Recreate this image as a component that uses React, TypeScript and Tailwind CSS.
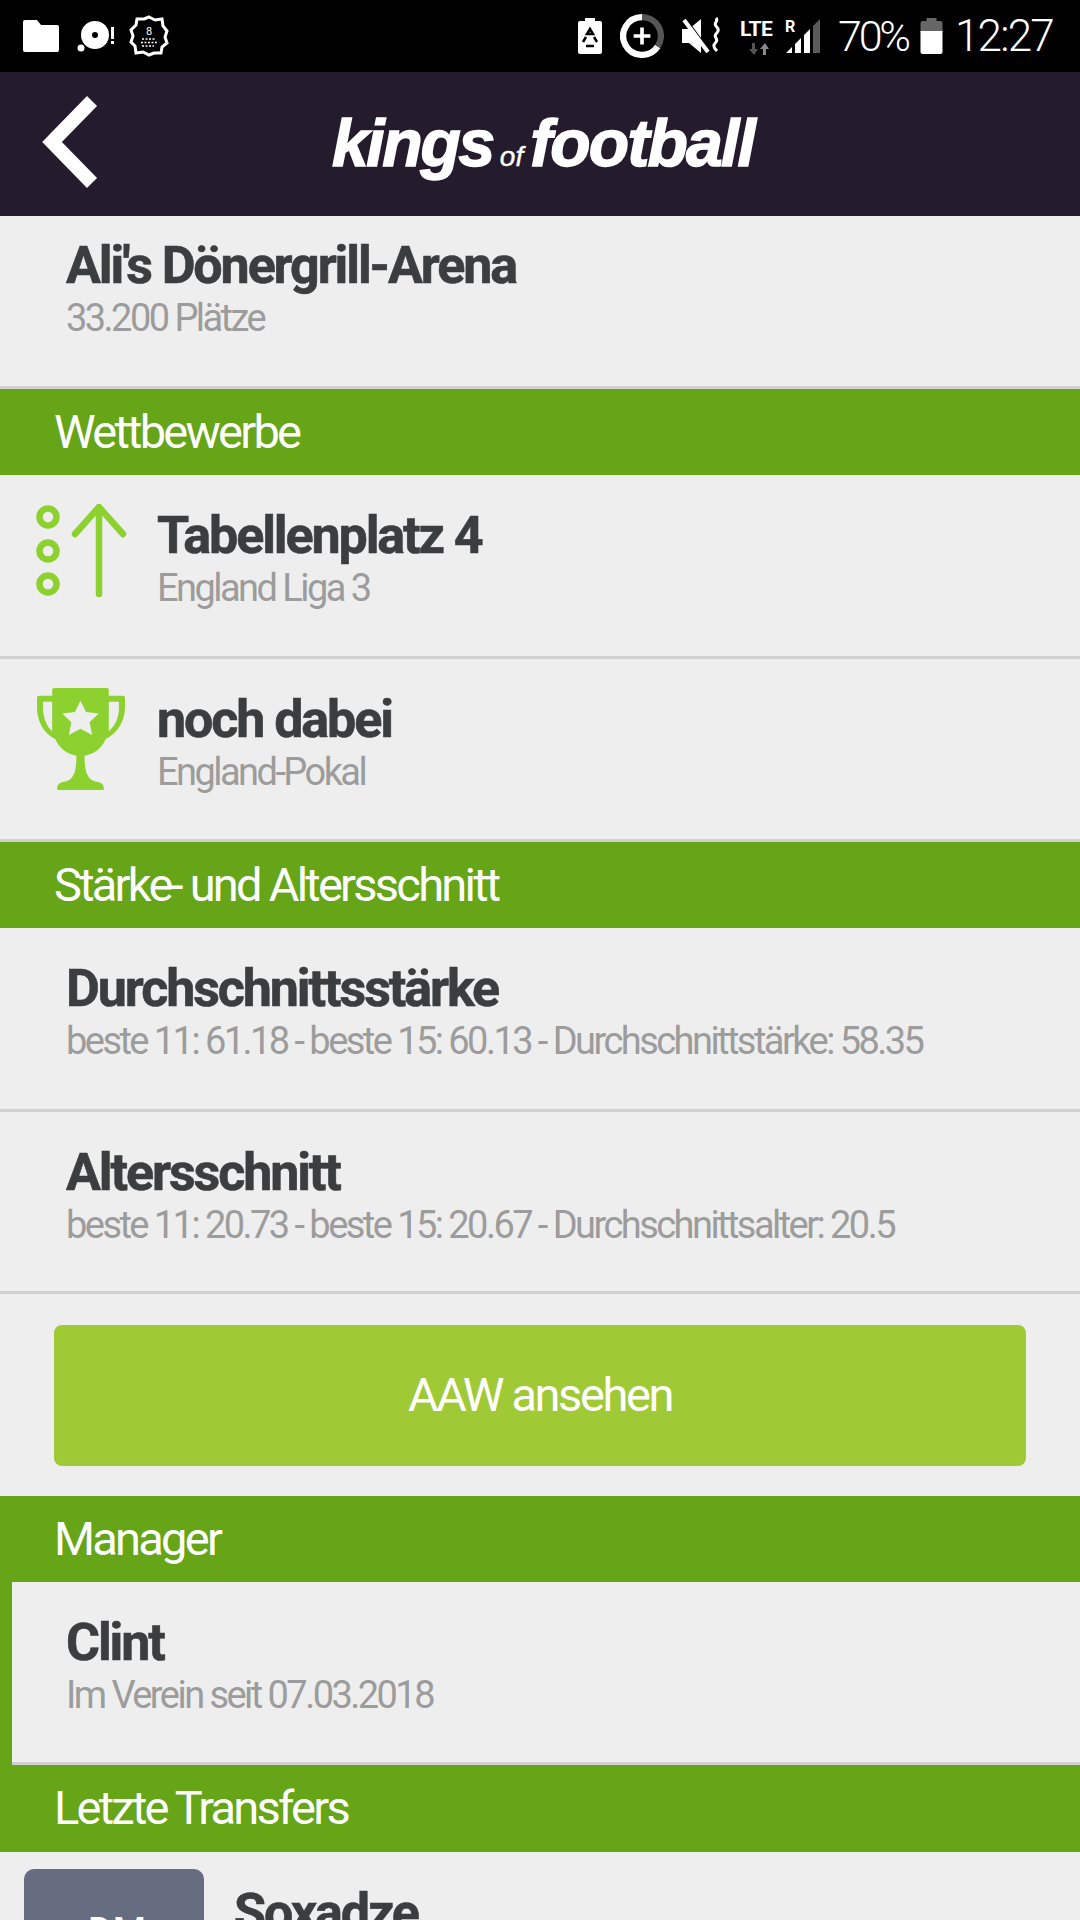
import React from "react";

const Sec = ({ t, h = 87 }: { t: string; h?: number }) => (
  <div className="bg-[#65a517] pl-[54px] flex items-center text-white text-[47px] font-normal tracking-[-2.75px] leading-none" style={{ height: h }}>
    <span className="relative top-[-1px]">{t}</span>
  </div>
);

const Row = ({ title, sub, icon, h = 184, pad = 66, top = 31 }: { title: string; sub: string; icon?: React.ReactNode; h?: number; pad?: number; top?: number }) => (
  <div className="relative border-b-[3px] border-[#d0d0d0]" style={{ height: h, paddingLeft: pad, paddingTop: top }}>
    {icon}
    <div className="text-[52px] leading-[60px] font-bold text-[#3c3d3f] tracking-[-2.1px] whitespace-nowrap [-webkit-text-stroke:0.6px_#3c3d3f]">{title}</div>
    <div className="text-[38px] leading-[44px] text-[#9c9c9c] tracking-[-2.55px] whitespace-nowrap font-normal">{sub}</div>
  </div>
);

const RankIcon = () => (
  <svg width="96" height="96" viewBox="0 0 96 96" className="absolute left-[36px] top-[29px]" fill="none" stroke="#8dd130" strokeLinecap="round" strokeLinejoin="round">
    <circle cx="12" cy="13" r="8.5" strokeWidth="6.500" />
    <circle cx="12" cy="47" r="8.5" strokeWidth="6.500" />
    <circle cx="12" cy="80" r="8.5" strokeWidth="6.500" />
    <path d="M63 90V3M39 30L63 3l24 27" strokeWidth="6.500" />
  </svg>
);

const Trophy = () => (
  <svg width="89" height="102" viewBox="0 0 88 104" preserveAspectRatio="none" className="absolute left-[37px] top-[29px]">
    <path fillRule="evenodd" fill="#8dd130" d="M17 0h52a2 2 0 0 1 2 2v6h14a2 2 0 0 1 2 2v10c0 14-8 27-19 32-4 10-13 16-21 17 0 14 2 24 10 26 5 1 9 2 9 7v3H20v-3c0-5 4-6 9-7 8-2 10-12 10-26-8-1-17-7-21-17C7 47 0 34 0 20V10a2 2 0 0 1 2-2h13V2a2 2 0 0 1 2-2zM6 14v6c0 11 4 20 9 24V14zM71 14v30c6-5 10-13 10-24v-6z" />
    <path fill="#eeeeee" d="M43 13l5.5 11.5 12.5 1.5-9 9 2.500 13L43 41.500 31.500 48 34 35l-9-9 12.500-1.500z" />
  </svg>
);

const LogoText = () => (
  <div className="flex items-baseline text-white font-bold italic whitespace-nowrap [-webkit-text-stroke:1.5px_white]" style={{ fontFamily: '"Liberation Sans", sans-serif' }}>
    <span className="text-[66px] tracking-[-2.3px] leading-none">kings</span>
    <span className="text-[28px] font-normal ml-[7px] mr-[7px] tracking-[0px] leading-none [-webkit-text-stroke:0.4px_white]">of</span>
    <span className="text-[66px] tracking-[-1.8px] leading-none">football</span>
  </div>
);

const StatusLeft = () => (
  <div className="flex items-center">
    <svg width="36" height="32" viewBox="0 0 36 32" className="ml-[23px]"><path fill="#fff" d="M2 0h12l4 5h16a2 2 0 0 1 2 2v23a2 2 0 0 1-2 2H2a2 2 0 0 1-2-2V2a2 2 0 0 1 2-2z" /></svg>
    <svg width="40" height="36" viewBox="0 0 38 36" className="ml-[17px]">
      <path fillRule="evenodd" fill="#fff" d="M18 3a14 14 0 1 1 0 28 14 14 0 0 1 0-28zm0 11a3 3 0 1 0 0 6 3 3 0 0 0 0-6z" />
      <circle cx="4" cy="30" r="3.500" fill="#fff" />
      <rect x="34" y="9" width="3" height="12" fill="#fff" />
      <rect x="34" y="23" width="3" height="3" fill="#fff" />
    </svg>
    <svg width="42" height="42" viewBox="0 0 42 42" className="ml-[12px]" fill="none">
      <path stroke="#fff" strokeWidth="3" d="M21 2l6 3 7-1 1 7 4 5-2 6 2 6-5 4-1 6-7 0-5 2-6-3-7 1-1-7-4-4 2-6-2-6 5-5 1-6 7 0z" />
      <text x="21" y="20" textAnchor="middle" fill="#fff" fontSize="11" style={{ fontFamily: '"Roboto", sans-serif' }}>8</text>
      <path stroke="#fff" strokeWidth="1.500" strokeDasharray="2 1.500" d="M14 24h14M13 27.500h16M14 31h12" />
    </svg>
  </div>
);

const StatusRight = () => (
  <div className="flex items-center absolute left-[578px] top-0 h-[72px]" style={{ fontFamily: '"Roboto", sans-serif' }}>
    <svg width="24" height="36" viewBox="0 0 24 36">
      <path fill="#fff" d="M7 0h10v3h5a2 2 0 0 1 2 2v29a2 2 0 0 1-2 2H2a2 2 0 0 1-2-2V5a2 2 0 0 1 2-2h5z" />
      <path fill="none" stroke="#000" strokeWidth="2.500" d="M12 11l-3 5h6zM5 24l3-5M19 24l-3-5M8 28h8" />
    </svg>
    <svg width="44" height="44" viewBox="0 0 42 42" className="ml-[18px]" fill="none">
      <path stroke="#fff" strokeWidth="6" d="M21 3a18 18 0 1 0 15 28" />
      <path stroke="#555" strokeWidth="6" d="M21 3a18 18 0 0 1 15 28" />
      <path stroke="#fff" strokeWidth="3.500" d="M21 13v16M13 21h16" />
    </svg>
    <svg width="41" height="40" viewBox="0 0 41 38" className="ml-[18px]">
      <path fill="#fff" d="M0 12h7L19 2v34L7 26H0z" />
      <path stroke="#000" strokeWidth="3" d="M1 -1l22 30" />
      <path stroke="#fff" strokeWidth="4" d="M2 3l24 32" />
      <path stroke="#fff" strokeWidth="3" fill="none" d="M34 1c3 3-3 5 0 8s3 5 0 8 3 5 0 8-3 5 1 9" />
    </svg>
    <div className="relative w-[38px] h-[40px] ml-[17px] text-white font-bold text-[21px] leading-none">
      <span className="absolute left-0 top-[3px] tracking-[-0.5px]">LTE</span>
      <svg width="22" height="12" viewBox="0 0 22 12" className="absolute left-[8px] top-[27px]">
        <path fill="#555" d="M4 0h3v6h3l-4 6-5-6h3z" />
        <path fill="#888" d="M15 12h3V6h3l-4-6-5 6h3z" />
      </svg>
    </div>
    <div className="relative w-[38px] h-[38px] ml-[7px]">
      <span className="absolute left-0 top-[2px] text-white font-bold text-[16px] leading-none">R</span>
      <svg width="38" height="36" viewBox="0 0 36 36" className="absolute left-0 top-[1px]">
        <path fill="#fff" d="M0 35l6-6v6zM9 26l6-6v15H9zM18 17l6-6v24h-6z" />
        <path fill="#5a5a5a" d="M27 8l7-7v34h-7z" />
      </svg>
    </div>
    <span className="w-[70px] text-white text-[43px] leading-none ml-[15px] tracking-[-3.2px] font-light">70%</span>
    <svg width="23" height="36" viewBox="0 0 22 36" className="ml-[12px]">
      <path fill="#666" d="M6 0h10v3h4a2 2 0 0 1 2 2v9H0V5a2 2 0 0 1 2-2h4z" />
      <path fill="#fff" d="M0 13h22v21a2 2 0 0 1-2 2H2a2 2 0 0 1-2-2z" />
    </svg>
    <span className="text-white text-[44px] leading-none ml-[12px] tracking-[-1.8px] font-light">12:27</span>
  </div>
);

export default function App() {
  return (
    <div className="w-[1080px] h-[1920px] overflow-hidden bg-[#eeeeee] relative" style={{ fontFamily: 'Roboto, sans-serif' }}>
      <div className="h-[72px] bg-black flex items-center"><StatusLeft /></div>
      <StatusRight />
      <div className="h-[144px] bg-[#241c2c] relative flex items-center justify-center">
        <svg width="58" height="92" viewBox="0 0 58 92" className="absolute left-[41px] top-[24px]">
          <path fill="none" stroke="#fff" strokeWidth="14" d="M51 5L11 46l40 41" />
        </svg>
        <div className="relative left-[3px] top-[-1px]"><LogoText /></div>
      </div>
      <Row title="Ali's Dönergrill-Arena" sub="33.200 Plätze" h={173} top={20} />
      <Sec t="Wettbewerbe" h={86} />
      <Row title="Tabellenplatz 4" sub="England Liga 3" pad={157} icon={<RankIcon />} />
      <Row title="noch dabei" sub="England-Pokal" pad={157} h={183} icon={<Trophy />} />
      <Sec t="Stärke- und Altersschnitt" h={86} />
      <Row title="Durchschnittsstärke" sub="beste 11: 61.18 - beste 15: 60.13 - Durchschnittstärke: 58.35" />
      <Row title="Altersschnitt" sub="beste 11: 20.73 - beste 15: 20.67 - Durchschnittsalter: 20.5" h={182} />
      <div className="h-[202px] px-[54px] pt-[31px]">
        <div className="h-[141px] rounded-[8px] bg-[#a0c936] flex items-center justify-center text-white text-[47px] font-normal tracking-[-2.4px]">AAW ansehen</div>
      </div>
      <Sec t="Manager" h={86} />
      <div className="flex">
        <div className="w-[12px] bg-[#65a517] h-[183px]" />
        <div className="flex-1"><Row title="Clint" sub="Im Verein seit 07.03.2018" pad={54} h={183} /></div>
      </div>
      <Sec t="Letzte Transfers" />
      <div className="flex pl-[24px] pt-[17px]">
        <div className="w-[180px] h-[120px] rounded-[10px] bg-[#666d80] flex justify-center pl-[6px] pt-[44px] text-white text-[38px] leading-none font-medium">DM</div>
        <div className="pl-[30px] pt-[14px] text-[52px] leading-[60px] font-bold text-[#3c3d3f] tracking-[-2.1px] [-webkit-text-stroke:0.6px_#3c3d3f]">Soxadze</div>
      </div>
    </div>
  );
}
